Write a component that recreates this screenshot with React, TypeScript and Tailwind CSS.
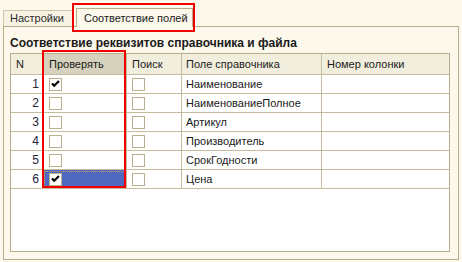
import React from "react";

const rows = [
  { n: 1, check: true, field: "Наименование" },
  { n: 2, check: false, field: "НаименованиеПолное" },
  { n: 3, check: false, field: "Артикул" },
  { n: 4, check: false, field: "Производитель" },
  { n: 5, check: false, field: "СрокГодности" },
  { n: 6, check: true, field: "Цена", selected: true },
];

const Box: React.FC<{ checked?: boolean }> = ({ checked }) => (
  <div className="w-[13px] h-[13px] border border-[#b9ae8e] bg-white flex items-center justify-center">
    {checked && (
      <svg width="9" height="8" viewBox="0 0 9 8">
        <path d="M1 3.5 L3.2 5.8 L8 1" stroke="#000" strokeWidth="2.2" fill="none" />
      </svg>
    )}
  </div>
);

const cell = "border-r border-b border-[#c6bc9c] h-[19px] flex items-center";

export default function App() {
  return (
    <div className="relative w-[462px] h-[262px] bg-[#fcf8ec] text-[11px] text-[#1a1a1a] overflow-hidden" style={{ fontFamily: '"Liberation Sans", Arial, sans-serif' }}>
      {/* tabs */}
      <div className="flex items-end pl-[3px] pt-[7px] h-[26px]">
        <div className="w-[70px] h-[16px] border border-b-0 border-[#cfc6a8] bg-[#f7f3e4] flex items-center pl-[6px] text-[#2a2a2a]">Настройки</div>
        <div className="ml-[3px] w-[117px] h-[19px] border border-b-0 border-[#b7ad8a] bg-[#fcf8ec] flex items-center pl-[7px] relative z-10 translate-y-[1px]">Соответствие полей</div>
      </div>
      {/* panel */}
      <div className="mx-[3px] h-[234px] border border-[#b7ad8a] px-[6px] pt-[9px]">
        <div className="font-bold text-[12px] h-[17px] leading-[14px] text-[#1a1a1a]">Соответствие реквизитов справочника и файла</div>
        <div className="w-[440px] h-[199px] border border-[#b7ad8a] bg-white">
          <div className="grid grid-cols-[32px_84px_55px_140px_1fr] bg-[#f2eedd]">
            <div className={`${cell} h-[21px] pl-[5px]`}>N</div>
            <div className={`${cell} h-[21px] pl-[6px] bg-[#d6d2bd]`}>Проверять</div>
            <div className={`${cell} h-[21px] pl-[5px]`}>Поиск</div>
            <div className={`${cell} h-[21px] pl-[4px]`}>Поле справочника</div>
            <div className={`${cell} h-[21px] pl-[5px] border-r-0`}>Номер колонки</div>
          </div>
          {rows.map((r) => (
            <div key={r.n} className="grid grid-cols-[32px_84px_55px_140px_1fr]">
              <div className={`${cell} justify-end pr-[3px] text-[12px] text-[#22223a]`}>{r.n}</div>
              <div className={`${cell} pl-[6px] ${r.selected ? "bg-[#5168c0] outline-1 outline-dotted outline-[#c9a84a] -outline-offset-2" : ""}`}>
                <Box checked={r.check} />
              </div>
              <div className={`${cell} pl-[5px]`}>
                <Box />
              </div>
              <div className={`${cell} pl-[4px]`}>{r.field}</div>
              <div className={`${cell} border-r-0`}></div>
            </div>
          ))}
        </div>
      </div>
      {/* annotation frames */}
      <div className="absolute left-[72px] top-[3px] w-[123px] h-[29px] border-2 border-[#f00000] z-20" />
      <div className="absolute left-[42px] top-[50px] w-[84px] h-[138px] border-2 border-[#f00000] z-20" />
    </div>
  );
}
